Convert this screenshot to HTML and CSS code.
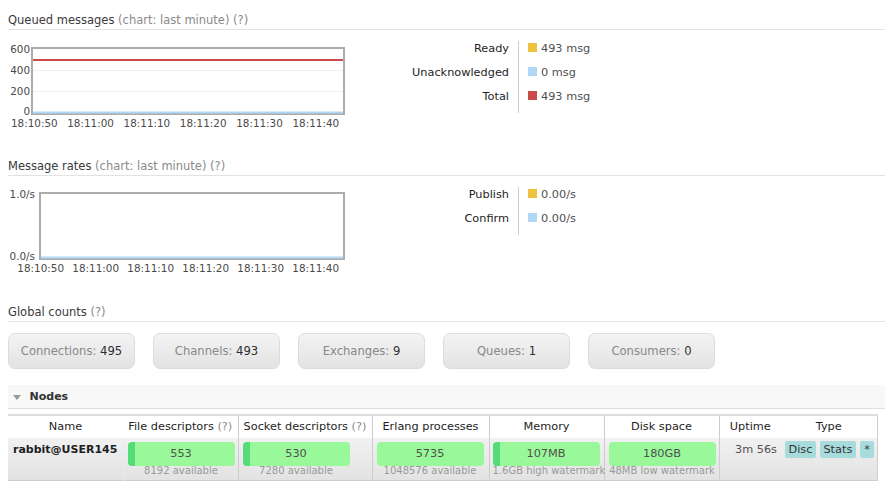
FILE: index.html
```html
<!DOCTYPE html>
<html>
<head>
<meta charset="utf-8">
<title>Overview</title>
<link rel="stylesheet" href="styles.css">
</head>
<body>
<div class="main">
  <h3 class="section-title">Queued messages <span class="muted">(chart: last minute) (?)</span></h3>
  <div class="chart-row">
    <svg class="chart" width="342" height="100" viewBox="8 38 342 100">
      <rect x="32" y="48" width="312" height="66" fill="#fff" stroke="#acacac" stroke-width="2"/>
      <line x1="33" y1="70.5" x2="343" y2="70.5" stroke="#f0f0f0" stroke-width="1"/>
      <line x1="33" y1="91.5" x2="343" y2="91.5" stroke="#f0f0f0" stroke-width="1"/>
      <line x1="33" y1="60" x2="343" y2="60" stroke="#cb4b4b" stroke-width="2"/>
      <line x1="33" y1="112.5" x2="343" y2="112.5" stroke="#afd8f8" stroke-width="2"/>
      <g class="ylab">
        <text x="30" y="52.5">600</text>
        <text x="30" y="73.5">400</text>
        <text x="30" y="94.5">200</text>
        <text x="30" y="115">0</text>
      </g>
      <g class="xlab">
        <text x="34.3" y="127">18:10:50</text>
        <text x="90.6" y="127">18:11:00</text>
        <text x="146.9" y="127">18:11:10</text>
        <text x="203.2" y="127">18:11:20</text>
        <text x="259.5" y="127">18:11:30</text>
        <text x="315.8" y="127">18:11:40</text>
      </g>
    </svg>
    <table class="legend">
      <tr><th>Ready</th><td><span class="swatch sw-yellow"></span>493 msg</td></tr>
      <tr><th>Unacknowledged</th><td><span class="swatch sw-blue"></span>0 msg</td></tr>
      <tr><th>Total</th><td><span class="swatch sw-red"></span>493 msg</td></tr>
    </table>
  </div>

  <h3 class="section-title spaced">Message rates <span class="muted">(chart: last minute) (?)</span></h3>
  <div class="chart-row">
    <svg class="chart" width="342" height="100" viewBox="8 184 342 100">
      <rect x="40" y="193" width="304" height="66" fill="#fff" stroke="#acacac" stroke-width="2"/>
      <line x1="41" y1="257.5" x2="343" y2="257.5" stroke="#afd8f8" stroke-width="2"/>
      <g class="ylab">
        <text x="35" y="198">1.0/s</text>
        <text x="35" y="260">0.0/s</text>
      </g>
      <g class="xlab">
        <text x="40.7" y="271.5">18:10:50</text>
        <text x="95.7" y="271.5">18:11:00</text>
        <text x="150.7" y="271.5">18:11:10</text>
        <text x="205.7" y="271.5">18:11:20</text>
        <text x="260.7" y="271.5">18:11:30</text>
        <text x="315.7" y="271.5">18:11:40</text>
      </g>
    </svg>
    <table class="legend">
      <tr><th>Publish</th><td><span class="swatch sw-yellow"></span>0.00/s</td></tr>
      <tr><th>Confirm</th><td><span class="swatch sw-blue"></span>0.00/s</td></tr>
    </table>
  </div>

  <h3 class="section-title spaced">Global counts <span class="muted">(?)</span></h3>
  <div class="counts">
    <div class="count-box"><span class="count-label">Connections:</span>&nbsp;<span class="count-num">495</span></div>
    <div class="count-box"><span class="count-label">Channels:</span>&nbsp;<span class="count-num">493</span></div>
    <div class="count-box"><span class="count-label">Exchanges:</span>&nbsp;<span class="count-num">9</span></div>
    <div class="count-box"><span class="count-label">Queues:</span>&nbsp;<span class="count-num">1</span></div>
    <div class="count-box"><span class="count-label">Consumers:</span>&nbsp;<span class="count-num">0</span></div>
  </div>

  <div class="section-bar"><span class="tri"></span><span class="bar-title">Nodes</span></div>
  <table class="nodes">
    <colgroup>
      <col class="c-name"><col class="c-fd"><col class="c-sd"><col class="c-ep"><col class="c-mem"><col class="c-disk"><col class="c-up"><col class="c-type">
    </colgroup>
    <thead>
      <tr>
        <th>Name</th>
        <th>File descriptors <span class="muted">(?)</span></th>
        <th class="sep">Socket descriptors <span class="muted">(?)</span></th>
        <th class="sep">Erlang processes</th>
        <th class="sep">Memory</th>
        <th class="sep">Disk space</th>
        <th class="sep">Uptime</th>
        <th>Type</th>
      </tr>
    </thead>
    <tbody>
      <tr>
        <td class="name">rabbit@USER145</td>
        <td class="light-sep">
          <div class="meter"><div class="bar"><span class="fill" style="width:7px"></span><span class="bar-val">553</span></div><div class="sub">8192 available</div></div>
        </td>
        <td class="sep">
          <div class="meter"><div class="bar"><span class="fill" style="width:7px"></span><span class="bar-val">530</span></div><div class="sub">7280 available</div></div>
        </td>
        <td class="sep">
          <div class="meter"><div class="bar"><span class="bar-val">5735</span></div><div class="sub">1048576 available</div></div>
        </td>
        <td class="sep mem">
          <div class="meter"><div class="bar"><span class="fill" style="width:7px"></span><span class="bar-val">107MB</span></div><div class="sub">1.6GB high watermark</div></div>
        </td>
        <td class="sep">
          <div class="meter"><div class="bar"><span class="bar-val">180GB</span></div><div class="sub">48MB low watermark</div></div>
        </td>
        <td class="sep uptime">3m 56s</td>
        <td class="type"><span class="badge">Disc</span><span class="badge">Stats</span><span class="badge badge-star">*</span></td>
      </tr>
    </tbody>
  </table>
</div>
</body>
</html>
```

FILE: styles.css
```css
html, body {
  margin: 0;
  padding: 0;
  background: #fff;
}

body {
  font-family: "DejaVu Sans", Verdana, sans-serif;
  font-size: 11.3px;
  color: #444;
}

.main {
  padding: 12px 0 0 8px;
}

.section-title {
  margin: 0;
  font-size: 11.5px;
  font-weight: normal;
  line-height: 15px;
  padding: 1px 0 1px;
  border-bottom: 1px solid #e2e2e2;
  color: #3a3a3a;
}

.section-title.spaced {
  margin-top: 20px;
}

.muted {
  color: #8a8a8a;
}

.chart-row {
  display: flex;
  align-items: flex-start;
}

.chart {
  display: block;
  margin-top: 8px;
  flex: none;
}

.chart text {
  font-family: "DejaVu Sans", Verdana, sans-serif;
  font-size: 10.4px;
  fill: #4a4a4a;
}

.ylab text {
  text-anchor: end;
}

.xlab text {
  text-anchor: middle;
}

.legend {
  margin-top: 11px;
  border-collapse: collapse;
  border-spacing: 0;
}

.legend th {
  width: 159px;
  padding: 0 9px 9px 0;
  text-align: right;
  font-weight: normal;
  line-height: 15px;
  color: #1e1e1e;
}

.legend td {
  border-left: 1px solid #cfcfcf;
  padding: 0 0 9px 9px;
  line-height: 15px;
  color: #505050;
  white-space: nowrap;
}

.swatch {
  display: inline-block;
  width: 9px;
  height: 9px;
  margin-right: 4px;
}

.sw-yellow { background: #edc240; }
.sw-blue { background: #afd8f8; }
.sw-red { background: #cb4b4b; }

.counts {
  display: flex;
  gap: 18px;
  margin-top: 11px;
}

.count-box {
  box-sizing: border-box;
  width: 127px;
  height: 36px;
  display: flex;
  align-items: center;
  justify-content: center;
  border: 1px solid #dcdcdc;
  border-radius: 7px;
  background: linear-gradient(#f3f3f3, #e3e3e3);
  font-size: 11.6px;
}

.count-label {
  color: #888;
}

.count-num {
  color: #2e2e2e;
}

.section-bar {
  margin-top: 16px;
  height: 23px;
  background: #f8f8f8;
  border-bottom: 1px solid #dedede;
  display: flex;
  align-items: center;
  padding-left: 5px;
}

.tri {
  width: 0;
  height: 0;
  border-left: 4.5px solid transparent;
  border-right: 4.5px solid transparent;
  border-top: 5px solid #999;
  margin-right: 8.5px;
  margin-top: 1px;
}

.bar-title {
  font-weight: bold;
  font-size: 11px;
  color: #333;
}

.nodes {
  margin-top: 5px;
  width: 869px;
  table-layout: fixed;
  border-collapse: collapse;
  border-top: 2px solid #dcdcdc;
  border-right: 1px solid #cdcdcd;
  border-bottom: 1px solid #cdcdcd;
}

.c-name { width: 115px; }
.c-fd { width: 115px; }
.c-sd { width: 134px; }
.c-ep { width: 117px; }
.c-mem { width: 115px; }
.c-disk { width: 115px; }
.c-up { width: 62px; }
.c-type { width: 96px; }

.nodes th {
  font-weight: normal;
  color: #1e1e1e;
  line-height: 15px;
  padding: 3px 0 4px;
  text-align: center;
  white-space: nowrap;
  background: #fff;
}

.nodes td {
  vertical-align: top;
  padding: 4px 0 4px 4px;
  line-height: 15px;
}

.nodes tbody tr {
  background: linear-gradient(#f1f1f1, #e2e2e2);
}

.nodes .sep {
  border-left: 1px solid #cdcdcd;
}

.nodes .light-sep {
  border-left: 1px solid #eaeaea;
}

.nodes td.name {
  font-weight: bold;
  font-size: 11px;
  color: #1e1e1e;
  padding-left: 5px;
  white-space: nowrap;
}

.meter {
  width: 107px;
}

.nodes td.mem {
  padding-left: 3px;
}

.bar {
  position: relative;
  height: 24px;
  border-radius: 4px;
  background: #99f899;
  overflow: hidden;
  display: flex;
  align-items: center;
  justify-content: center;
}

.fill {
  position: absolute;
  left: 0;
  top: 0;
  bottom: 0;
  background: #55dc78;
}

.bar-val {
  position: relative;
  color: #505050;
  line-height: 24px;
}

.sub {
  text-align: center;
  font-size: 10px;
  line-height: 10px;
  color: #999;
  white-space: nowrap;
}

.nodes td.uptime {
  text-align: right;
  padding-right: 4px;
  color: #505050;
}

.nodes td.type {
  padding: 3px 0 0 4px;
  white-space: nowrap;
}

.badge {
  display: inline-block;
  background: #a8dcdc;
  color: #333;
  line-height: 17px;
  padding: 0 3.5px;
  border-radius: 2px;
  margin-right: 4px;
}

.badge.badge-star {
  padding: 0 4.5px;
  margin-right: 0;
}
```
